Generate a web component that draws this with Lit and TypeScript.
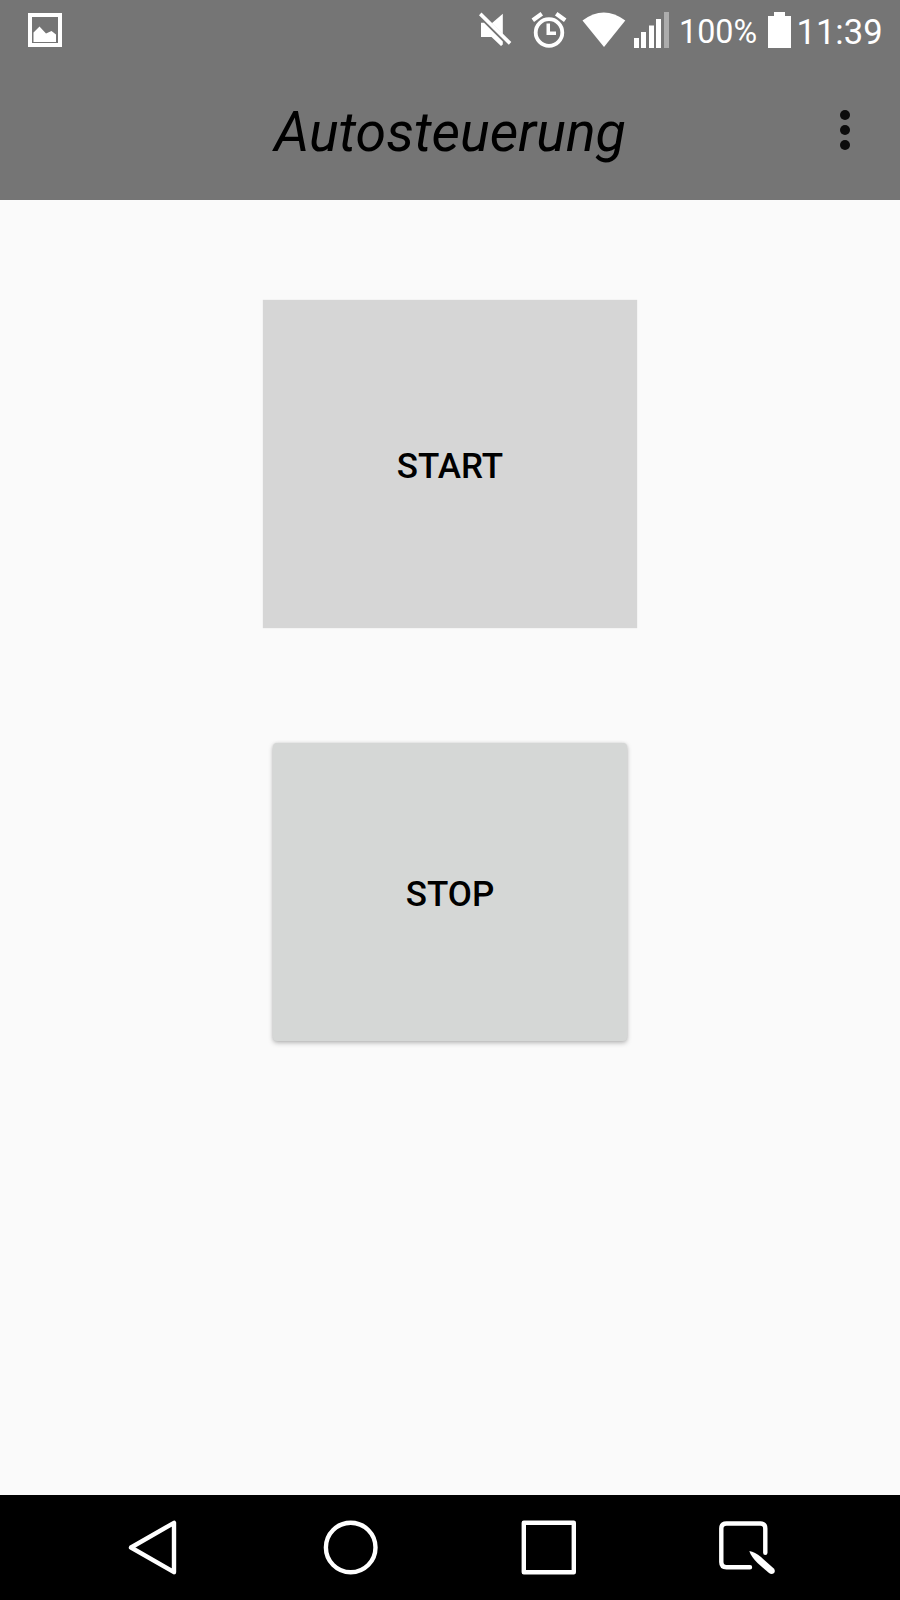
import { LitElement, html, css } from "lit";
import { customElement, property } from "lit/decorators.js";

@customElement("status-bar")
class StatusBar extends LitElement {
  @property() battery = "100%";
  @property() time = "11:39";

  static styles = css`
    :host {
      display: flex;
      align-items: center;
      height: 64px;
      padding: 0 17px 0 28px;
      color: #fff;
    }
    svg {
      display: block;
      flex: none;
      fill: #fff;
    }
    .spacer {
      flex: 1;
    }
    .mute { margin-right: 19px; }
    .alarm { margin-right: 15px; }
    .wifi { margin-right: 7px; }
    .signal { margin-right: 9px; }
    .percent {
      width: 77px;
      margin-right: 12px;
      font-size: 32.3px;
      line-height: 64px;
      white-space: nowrap;
    }
    .cell { margin-right: 5.5px; }
    .clock {
      width: 86.5px;
      font-size: 34.6px;
      line-height: 64px;
      white-space: nowrap;
    }
  `;

  render() {
    return html`
      <svg width="34" height="64" viewBox="28 0 34 64">
        <path fill-rule="evenodd" d="M28 13H62V47H28ZM32 17V43H58V17Z" />
        <path d="M33.5 42V32.5L39.5 26.5L46 33.5L51.5 31L56 34.5V42Z" />
      </svg>
      <span class="spacer"></span>
      <svg class="mute" width="33" height="64" viewBox="479 0 33 64">
        <path d="M502.8 13.8V34.3L491.8 23.3Z" />
        <path d="M481 22.7H484L502.8 41.5V44.5L501 46L491.5 37H481Z" />
        <path d="M481.5 12.5L511.3 42L508.8 44.8L479 15.3Z" />
      </svg>
      <svg class="alarm" width="36" height="64" viewBox="531 0 36 64">
        <circle cx="549" cy="32.5" r="13.3" fill="none" stroke="#fff" stroke-width="3.8" />
        <path d="M546.5 23.5H550V31.5H556V35H546.5Z" />
        <path
          d="M532.8 20.3L541.8 13.8M565.2 20.3L556.2 13.8"
          fill="none"
          stroke="#fff"
          stroke-width="4.2"
        />
      </svg>
      <svg class="wifi" width="44" height="64" viewBox="582 0 44 64">
        <path d="M582.5 20.5Q603.7 4.5 625.3 20.5L604 47Z" />
      </svg>
      <svg class="signal" width="37" height="64" viewBox="633 0 37 64">
        <path d="M634 38H639V48H634ZM641 32H646V48H641ZM649 25.5H654V48H649ZM656 19H661V48H656Z" />
        <path d="M664 12H669V48H664Z" fill="#acacac" />
      </svg>
      <span class="percent">${this.battery}</span>
      <svg class="cell" width="23" height="64" viewBox="768 0 23 64">
        <path d="M774 12H785V16H791V48H768V16H774Z" />
      </svg>
      <span class="clock">${this.time}</span>
    `;
  }
}

@customElement("title-bar")
class TitleBar extends LitElement {
  @property() heading = "";

  static styles = css`
    :host {
      display: grid;
      grid-template-columns: 90px 1fr 90px;
      align-items: center;
      height: 136px;
      color: #000;
    }
    .heading {
      grid-column: 2;
      margin: 0;
      padding-top: 1px;
      text-align: center;
      font-size: 55.4px;
      font-weight: 400;
      font-style: italic;
      white-space: nowrap;
    }
    .more {
      display: flex;
      flex-direction: column;
      gap: 5px;
      padding: 0 0 4px 30px;
    }
    .dot {
      width: 10px;
      height: 10px;
      border-radius: 50%;
      background: #0c0c0c;
    }
  `;

  render() {
    return html`
      <h1 class="heading">${this.heading}</h1>
      <div class="more">
        <span class="dot"></span><span class="dot"></span><span class="dot"></span>
      </div>
    `;
  }
}

@customElement("nav-bar")
class NavBar extends LitElement {
  static styles = css`
    :host {
      display: flex;
      height: 105px;
      padding-left: 124px;
      gap: 134px;
      align-items: center;
      background: #000;
    }
    svg {
      display: block;
      flex: none;
      fill: none;
      stroke: #fff;
      stroke-width: 4.4;
      stroke-linejoin: round;
      stroke-linecap: round;
    }
    .tip {
      fill: #fff;
      stroke: none;
    }
  `;

  render() {
    return html`
      <svg width="64" height="105" viewBox="124 1495 64 105">
        <path d="M174 1522.8V1572.2L131 1547.5Z" />
      </svg>
      <svg width="64" height="105" viewBox="322 1495 64 105">
        <circle cx="350.7" cy="1547.5" r="24.8" />
      </svg>
      <svg width="64" height="105" viewBox="520 1495 64 105">
        <rect x="523.8" y="1522.8" width="50" height="49.5" />
      </svg>
      <svg width="64" height="105" viewBox="718 1495 64 105">
        <path d="M750 1567.3H726.5Q721.3 1567.3 721.3 1562.1V1528.5Q721.3 1523.5 726.5 1523.5H760.5Q765.3 1523.5 765.3 1528.5V1552.8" />
        <path class="tip" d="M749.3 1551Q755 1552 761 1557L773.8 1568.5Q775.8 1571 773.8 1573.3Q771.5 1575 769 1573L757.5 1563Q751 1556.5 749.3 1551Z" />
      </svg>
    `;
  }
}

@customElement("app-root")
class AppRoot extends LitElement {
  static styles = css`
    :host {
      display: flex;
      flex-direction: column;
      height: 1600px;
      background: #fafafa;
      font-family: Roboto, sans-serif;
    }
    .top {
      background: #757575;
    }
    .content {
      flex: 1;
      display: flex;
      flex-direction: column;
      align-items: center;
      gap: 115px;
      padding-top: 100px;
    }
    .button {
      box-sizing: border-box;
      border: 0;
      margin: 0;
      padding: 4px 0 0;
      font: 500 35px Roboto, sans-serif;
      color: #000;
    }
    .start {
      width: 374px;
      height: 328px;
      background: #d6d6d6;
      box-shadow: 0 0 1px rgba(0, 0, 0, 0.15);
    }
    .stop {
      width: 354px;
      height: 298px;
      border-radius: 4px;
      background: #d5d7d6;
      box-shadow: 0 2px 5px rgba(0, 0, 0, 0.26), 0 0 3px rgba(0, 0, 0, 0.1);
    }
  `;

  render() {
    return html`
      <header class="top">
        <status-bar></status-bar>
        <title-bar heading="Autosteuerung"></title-bar>
      </header>
      <main class="content">
        <button class="button start">START</button>
        <button class="button stop">STOP</button>
      </main>
      <nav-bar></nav-bar>
    `;
  }
}
